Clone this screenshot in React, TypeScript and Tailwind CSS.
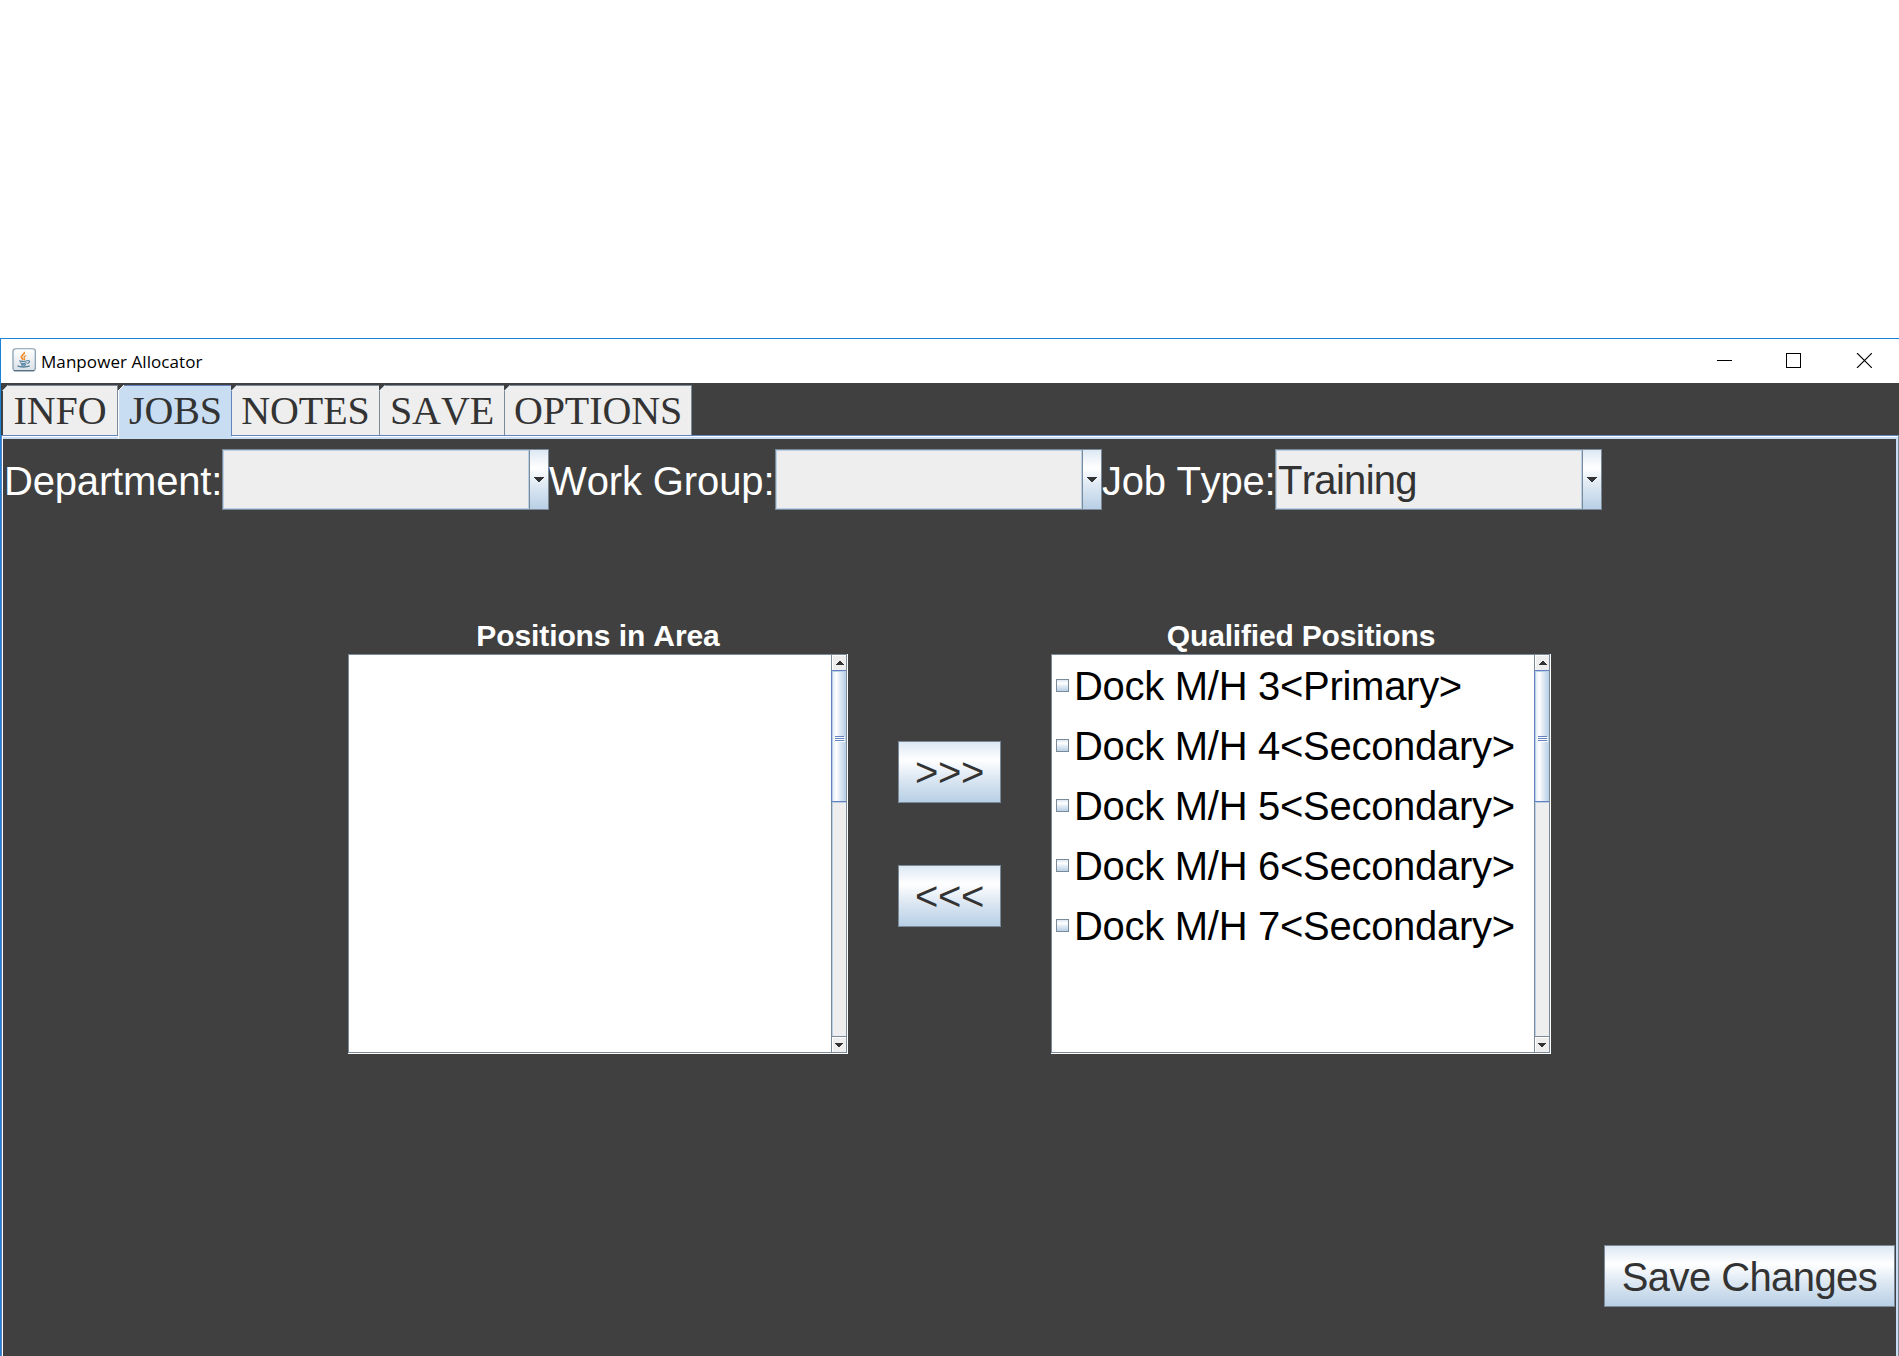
import type { ReactNode } from 'react';

const TABS = [
  { label: 'INFO', width: 'w-[115px]', active: false },
  { label: 'JOBS', width: 'w-[114px]', active: true },
  { label: 'NOTES', width: 'w-[148px]', active: false },
  { label: 'SAVE', width: 'w-[125px]', active: false },
  { label: 'OPTIONS', width: 'w-[187px]', active: false },
];

const QUALIFIED = [
  'Dock M/H 3<Primary>',
  'Dock M/H 4<Secondary>',
  'Dock M/H 5<Secondary>',
  'Dock M/H 6<Secondary>',
  'Dock M/H 7<Secondary>',
];

const METAL_DOWN =
  'bg-[linear-gradient(to_bottom,#dde8f3_0%,#ffffff_30%,#dde8f3_60%,#b8cfe5_100%)]';
const METAL_RIGHT =
  'bg-[linear-gradient(to_right,#dde8f3_0%,#ffffff_30%,#dde8f3_60%,#b8cfe5_100%)]';

function JavaIcon() {
  return (
    <svg width="24" height="24" viewBox="0 0 24 24" fill="none">
      <defs>
        <linearGradient id="frame" x1="0" y1="0" x2="0" y2="1">
          <stop offset="0" stopColor="#ffffff" />
          <stop offset="1" stopColor="#dce1e6" />
        </linearGradient>
      </defs>
      <rect x="1" y="0.75" width="22.3" height="22" rx="2.5" fill="url(#frame)" stroke="#7e99ae" strokeWidth="1.2" />
      <path d="M2 22.7H22" stroke="#4d6a80" strokeWidth="1.2" />
      <path d="M12.2 4C13.4 6.4 8.7 7.2 9.4 9.3C9.7 10.3 10.9 10.9 11 12" stroke="#ee8a2c" strokeWidth="1.7" />
      <path d="M14.3 7.5C12 8.4 11.6 9.3 12.4 10.3C12.9 11 12.6 11.6 12 12.1" stroke="#ee8a2c" strokeWidth="1.3" />
      <path d="M7.2 12.8C8.7 13.6 13.4 13.5 15.3 12.8M8 14.8C9.6 15.5 13.1 15.5 14.7 14.8M9 16.6C10.2 17.1 12.6 17.1 14 16.6" stroke="#52809f" strokeWidth="1.2" />
      <path d="M15.3 12.6C18.2 12 18.3 14.8 15.4 15.6" stroke="#52809f" strokeWidth="1.1" />
      <path d="M5.4 17.8C7.5 19.4 15 19.3 17.7 17.9" stroke="#52809f" strokeWidth="1.3" />
    </svg>
  );
}

function TitleBar() {
  return (
    <header className="flex h-11 items-start bg-white pl-[11px]">
      <div className="mt-[9px]">
        <JavaIcon />
      </div>
      <h1 className="ml-[5px] mt-[11px] whitespace-nowrap font-['Open_Sans',sans-serif] text-[17px] leading-6 tracking-[0.07px] text-black">
        Manpower Allocator
      </h1>
      <div className="ml-auto mr-[27px] mt-[14px] flex">
        <svg width="155" height="15" viewBox="0 0 155 15" fill="none" stroke="#000" shapeRendering="crispEdges">
          <path d="M0 7.5H15" />
          <rect x="69.5" y="0.5" width="14" height="14" />
          <path d="M140 0L155 15M155 0L140 15" shapeRendering="auto" strokeWidth="1.1" />
        </svg>
      </div>
    </header>
  );
}

function TabStrip() {
  return (
    <nav className="relative z-10 -mb-px flex h-[51px] pl-0.5">
      {TABS.map((tab) => (
        <div
          key={tab.label}
          className={`${tab.width} relative flex justify-center border-t border-[#7a8a99] ${
            tab.active
              ? "-mb-[3px] h-[54px] border-l border-l-white border-t-[#6382bf] bg-[#c8ddf2] after:absolute after:right-0 after:top-0 after:h-[50px] after:w-px after:bg-[#6382bf]"
              : 'h-[50px] border-r bg-[#eeeeee]'
          }`}
        >
          <span className="whitespace-nowrap font-['Liberation_Serif',serif] text-[40px] leading-[50px] tracking-[-0.1px] text-[#333333]">
            {tab.label}
          </span>
          <svg className="absolute -left-px -top-px" width="6" height="6" viewBox="0 0 6 6">
            <path d="M0 0H6L0 6Z" fill="#404040" />
            <path d="M0 6L6 0" stroke={tab.active ? '#ffffff' : '#9fb2c4'} />
          </svg>
        </div>
      ))}
    </nav>
  );
}

function Triangle({ up = false, small = false }: { up?: boolean; small?: boolean }) {
  const rows = small ? [8, 6, 4, 2] : [10, 8, 6, 4, 2];
  const width = rows[0];
  return (
    <svg width={width} height={rows.length} viewBox={`0 0 ${width} ${rows.length}`} fill="#333" shapeRendering="crispEdges">
      {rows.map((w, i) => (
        <rect key={w} x={(width - w) / 2} y={up ? rows.length - 1 - i : i} width={w} height="1" />
      ))}
    </svg>
  );
}

function ComboBox({ value = '' }: { value?: string }) {
  return (
    <div className="flex h-[61px] w-[327px] border border-[#7a8a99]">
      <div className="w-[306px] border border-[#b8cfe5] bg-[#eeeeee] pl-px text-[40px] leading-[59px] tracking-[-0.7px] text-[#333333]">
        {value}
      </div>
      <div className={`flex grow items-center justify-center border-l border-[#7a8a99] ${METAL_DOWN}`}>
        <Triangle />
      </div>
    </div>
  );
}

function Label({ className, children }: { className: string; children: ReactNode }) {
  return (
    <span className={`${className} h-[61px] whitespace-nowrap text-[40px] leading-[65px] text-white`}>
      {children}
    </span>
  );
}

function ScrollBar() {
  return (
    <div className="flex w-4 flex-col border-x border-[#7a8a99] bg-[#eeeeee]">
      <div className="flex h-[15px] items-center justify-center border-l border-t border-white">
        <Triangle up small />
      </div>
      <div className={`flex h-[132px] items-center justify-center border-y border-[#6382bf] shadow-[-1px_0_0_#6382bf,inset_1px_1px_0_#b8cfe5] ${METAL_RIGHT}`}>
        <div className="mt-1 flex flex-col gap-px">
          {[0, 1, 2].map((i) => (
            <div key={i} className="h-px w-[9px] bg-[#6382bf] shadow-[1px_1px_0_#fff]" />
          ))}
        </div>
      </div>
      <div className="grow border-l border-t border-[#b8cfe5]" />
      <div className="flex h-4 items-center justify-center border-t border-[#7a8a99] shadow-[inset_1px_1px_0_#fff]">
        <Triangle small />
      </div>
    </div>
  );
}

function ListPane({ title, tracking, children }: { title: string; tracking: string; children?: ReactNode }) {
  return (
    <section className="w-[500px]">
      <h2 className={`${tracking} h-9 whitespace-nowrap text-center text-[30px] font-bold leading-9 text-white`}>
        {title}
      </h2>
      <div className="border-b border-r border-white">
        <div className="flex h-[399px] border-y border-l border-[#7a8a99] bg-white">
          <div className="grow pl-1">{children}</div>
          <ScrollBar />
        </div>
      </div>
    </section>
  );
}

function CheckRow({ label }: { label: string }) {
  return (
    <label className="flex h-[60px] items-start gap-[5px]">
      <span className={`mt-6 size-[13px] border border-[#7a8a99] ${METAL_DOWN}`} />
      <span className="whitespace-nowrap text-[40px] leading-[63px] tracking-[-0.29px] text-black">{label}</span>
    </label>
  );
}

function MetalButton({ className, children }: { className: string; children: ReactNode }) {
  return (
    <button
      className={`${className} block h-[62px] whitespace-nowrap border border-[#7a8a99] text-[40px] text-[#333333] ${METAL_DOWN}`}
    >
      {children}
    </button>
  );
}

export default function App() {
  return (
    <div className="flex h-[1356px] w-[1899px] flex-col overflow-hidden bg-white pt-[338px] font-['Liberation_Sans',Arial,sans-serif] [font-kerning:none]">
      <div className="flex grow flex-col border-l border-t border-[#1883d7] bg-[#404040]">
        <TitleBar />
        <div className="h-0.5" />
        <TabStrip />
        <main className="flex grow flex-col border-l border-r border-t border-l-[#6382bf] border-r-[#7a8a99] border-t-[#6382bf]">
          <div className="flex grow flex-col border-l border-t border-white">
            <div className="flex grow flex-col border-r-2 border-t-2 border-[#c8ddf2]">
              <div className="flex pl-px pt-2.5">
                <Label className="w-[218px] tracking-[-0.17px]">Department:</Label>
                <ComboBox />
                <Label className="w-[226px] tracking-[-0.12px]">Work Group:</Label>
                <ComboBox />
                <Label className="w-[173px] tracking-[-0.25px]">Job Type:</Label>
                <ComboBox value="Training" />
              </div>
              <div className="mt-[108px] flex pl-[345px]">
                <ListPane title="Positions in Area" tracking="tracking-[-0.1px]" />
                <div className="ml-[50px] mr-[50px] flex flex-col gap-[62px] pt-[123px]">
                  <MetalButton className="w-[103px] pt-px leading-[59px] tracking-[-0.36px]">&gt;&gt;&gt;</MetalButton>
                  <MetalButton className="w-[103px] pt-px leading-[59px] tracking-[-0.36px]">&lt;&lt;&lt;</MetalButton>
                </div>
                <ListPane title="Qualified Positions" tracking="tracking-[-0.18px]">
                  {QUALIFIED.map((item) => (
                    <CheckRow key={item} label={item} />
                  ))}
                </ListPane>
              </div>
              <div className="mb-[49px] mr-px mt-auto flex justify-end">
                <MetalButton className="w-[291px] pt-[3px] leading-[57px] tracking-[-0.58px]">Save Changes</MetalButton>
              </div>
            </div>
          </div>
        </main>
      </div>
    </div>
  );
}
